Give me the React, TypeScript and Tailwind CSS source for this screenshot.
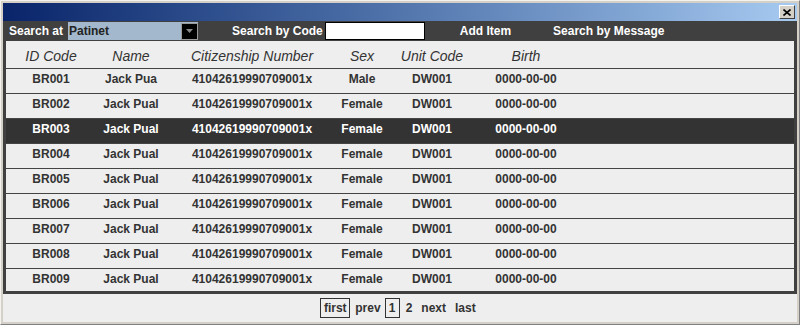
const rows = [
  { id: 'BR001', name: 'Jack Pua', sex: 'Male' },
  { id: 'BR002', name: 'Jack Pual', sex: 'Female' },
  { id: 'BR003', name: 'Jack Pual', sex: 'Female', selected: true },
  { id: 'BR004', name: 'Jack Pual', sex: 'Female' },
  { id: 'BR005', name: 'Jack Pual', sex: 'Female' },
  { id: 'BR006', name: 'Jack Pual', sex: 'Female' },
  { id: 'BR007', name: 'Jack Pual', sex: 'Female' },
  { id: 'BR008', name: 'Jack Pual', sex: 'Female' },
  { id: 'BR009', name: 'Jack Pual', sex: 'Female' },
]

const cols = 'grid grid-cols-[90px_70px_172px_48px_92px_96px]'

export default function App() {
  return (
    <div className="w-[800px] h-[325px] bg-[#d4d0c8] border-t border-l border-t-[#f4f2ee] border-l-[#f4f2ee] border-r border-b border-r-[#808080] border-b-[#808080] p-[2px] flex flex-col font-['Liberation_Sans',Arial,sans-serif] overflow-hidden">
      {/* Title bar */}
      <div className="h-[18px] shrink-0 bg-gradient-to-r from-[#0a246a] to-[#a6caf0] flex items-center justify-end pr-[2px]">
        <button
          type="button"
          className="w-[16px] h-[14px] bg-[#d4d0c8] border border-t-white border-l-white border-r-[#404040] border-b-[#404040] flex items-center justify-center"
        >
          <svg width="8" height="7" viewBox="0 0 8 7">
            <path d="M0.5 0.5 L7.5 6.5 M7.5 0.5 L0.5 6.5" stroke="#000" strokeWidth="1.6" />
          </svg>
        </button>
      </div>

      {/* Toolbar */}
      <div className="h-[20px] shrink-0 bg-[#404040] flex items-center pl-[6px] text-white text-[12px] font-bold">
        <span>Search at</span>
        <div className="ml-[5px] w-[130px] h-[18px] bg-[#a3b8cc] flex items-center justify-between">
          <span className="pl-[1px] text-[#222] font-bold">Patinet</span>
          <span className="w-[17px] h-[17px] bg-black border border-[#9a9a9a] flex items-center justify-center">
            <svg width="7" height="4" viewBox="0 0 7 4">
              <path d="M0 0 H7 L3.5 4 Z" fill="#8a8a8a" />
            </svg>
          </span>
        </div>
        <span className="ml-[34px]">Search by Code</span>
        <div className="ml-[2px] w-[100px] h-[18px] bg-white border border-black" />
        <span className="ml-[35px]">Add Item</span>
        <span className="ml-[42px]">Search by Message</span>
      </div>

      {/* Body */}
      <div className="flex-1 bg-[#eeeeee] flex flex-col">
        <div className="border-x-[3px] border-b-[3px] border-[#404040] bg-[#eeeeee]">
          <div className={`${cols} h-[27px] pt-[7px] text-[14px] italic text-[#333] leading-4`}>
            <span className="text-center">ID Code</span>
            <span className="text-center">Name</span>
            <span className="text-center">Citizenship Number</span>
            <span className="text-center">Sex</span>
            <span className="text-center">Unit Code</span>
            <span className="text-center">Birth</span>
          </div>
          <div className="h-[223px] overflow-hidden">
            {rows.map((r) => (
              <div
                key={r.id}
                className={[
                  cols,
                  'h-[25px] border-t border-[#444] pt-[2px] text-[12px] font-bold leading-4',
                  r.selected ? 'bg-[#333333] text-white' : 'bg-[#eeeeee] text-[#333]',
                ].join(' ')}
              >
                <span className="text-center">{r.id}</span>
                <span className="text-center">{r.name}</span>
                <span className="text-center">41042619990709001x</span>
                <span className="text-center">{r.sex}</span>
                <span className="text-center">DW001</span>
                <span className="text-center">0000-00-00</span>
              </div>
            ))}
          </div>
        </div>

        {/* Pagination */}
        <div className="flex-1 flex items-center justify-center text-[12px] font-bold text-[#333] pr-[4px]">
          <span className="w-[30px] h-[20px] border border-[#333] flex items-center justify-center">first</span>
          <span className="ml-[5px]">prev</span>
          <span className="ml-[4px] w-[15px] h-[20px] border border-[#333] flex items-center justify-center">1</span>
          <span className="ml-[6px]">2</span>
          <span className="ml-[9px]">next</span>
          <span className="ml-[9px]">last</span>
        </div>
      </div>
    </div>
  )
}
